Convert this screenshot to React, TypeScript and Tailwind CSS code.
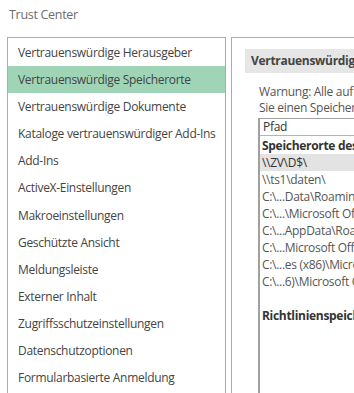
import React from 'react';

const navItems = [
    'Vertrauenswürdige Herausgeber',
    'Vertrauenswürdige Speicherorte',
    'Vertrauenswürdige Dokumente',
    'Kataloge vertrauenswürdiger Add-Ins',
    'Add-Ins',
    'ActiveX-Einstellungen',
    'Makroeinstellungen',
    'Geschützte Ansicht',
    'Meldungsleiste',
    'Externer Inhalt',
    'Zugriffsschutzeinstellungen',
    'Datenschutzoptionen',
    'Formularbasierte Anmeldung',
];

const userPaths = [
    '\\\\ZV\\D$\\',
    '\\\\ts1\\daten\\',
    'C:\\...Data\\Roaming\\Microsoft\\Templates\\',
    'C:\\...\\Microsoft Office\\root\\Templates\\',
    'C:\\...AppData\\Roaming\\Microsoft\\Word\\Startup\\',
    'C:\\...Microsoft Office\\root\\Office16\\STARTUP\\',
    'C:\\...es (x86)\\Microsoft Office\\root\\Templates\\',
    'C:\\...6)\\Microsoft Office\\root\\Office16\\STARTUP\\',
];

export default function App() {
    return (
        <div className="w-[354px] h-[393px] overflow-hidden bg-white text-[12px] tracking-[-0.3px] text-[#444] font-['Open_Sans',sans-serif]">
            <div className="h-[37px] pl-[9px] pt-[6px] text-[#6d6d6d] text-[12.5px]">Trust Center</div>

            <div className="flex gap-[5px] pl-[7px]">
                {/* left navigation */}
                <div className="w-[219px] shrink-0 h-[360px] border-l border-t border-r border-[#ababab] pt-px">
                    {navItems.map((item, i) => (
                        <div
                            key={item}
                            className={`h-[27.17px] flex items-center pl-[10px] whitespace-nowrap ${i === 1 ? 'bg-[#9fd5b6]' : ''}`}
                        >
                            {item}
                        </div>
                    ))}
                </div>

                {/* right content */}
                <div className="flex-1 min-w-0 h-[360px] border-l border-t border-[#ababab] pl-[13px] pt-[11px] overflow-hidden">
                    <div className="h-[24px] bg-[#e6e6e6] flex items-center pl-[6px] font-bold text-[#444] whitespace-nowrap overflow-hidden">
                        Vertrauenswürdige Speicherorte
                    </div>

                    <div className="pl-[14px] pt-[11px] leading-[16px] whitespace-nowrap text-[#555]">
                        <div>Warnung: Alle auf diesen Speicherorten gespeicherten Dateien</div>
                        <div>Sie einen Speicherort hinzufügen oder ändern, muss dieser sicher sein.</div>
                    </div>

                    <div className="ml-[13px] mt-[2px] h-[300px] border-l-2 border-t border-[#a0a0a0] whitespace-nowrap">
                        <div className="h-[17px] border-b border-[#b4b4b4] bg-white flex items-center pl-[3px] text-[#333]">
                            Pfad
                        </div>
                        <div className="h-[1px]" />
                        <div className="h-[17px] flex items-center pl-[2px] font-bold text-[#333]">
                            Speicherorte des Benutzers
                        </div>
                        {userPaths.map((p, i) => (
                            <div
                                key={p}
                                className={`h-[17.1px] flex items-center pl-[2px] ${i === 0 ? 'bg-[#e3e3e3] text-[#333]' : 'text-[#555]'}`}
                            >
                                {p}
                            </div>
                        ))}
                        <div className="h-[17px]" />
                        <div className="h-[17px] flex items-center pl-[2px] font-bold text-[#333]">
                            Richtlinienspeicherorte
                        </div>
                    </div>
                </div>
            </div>
        </div>
    );
}
